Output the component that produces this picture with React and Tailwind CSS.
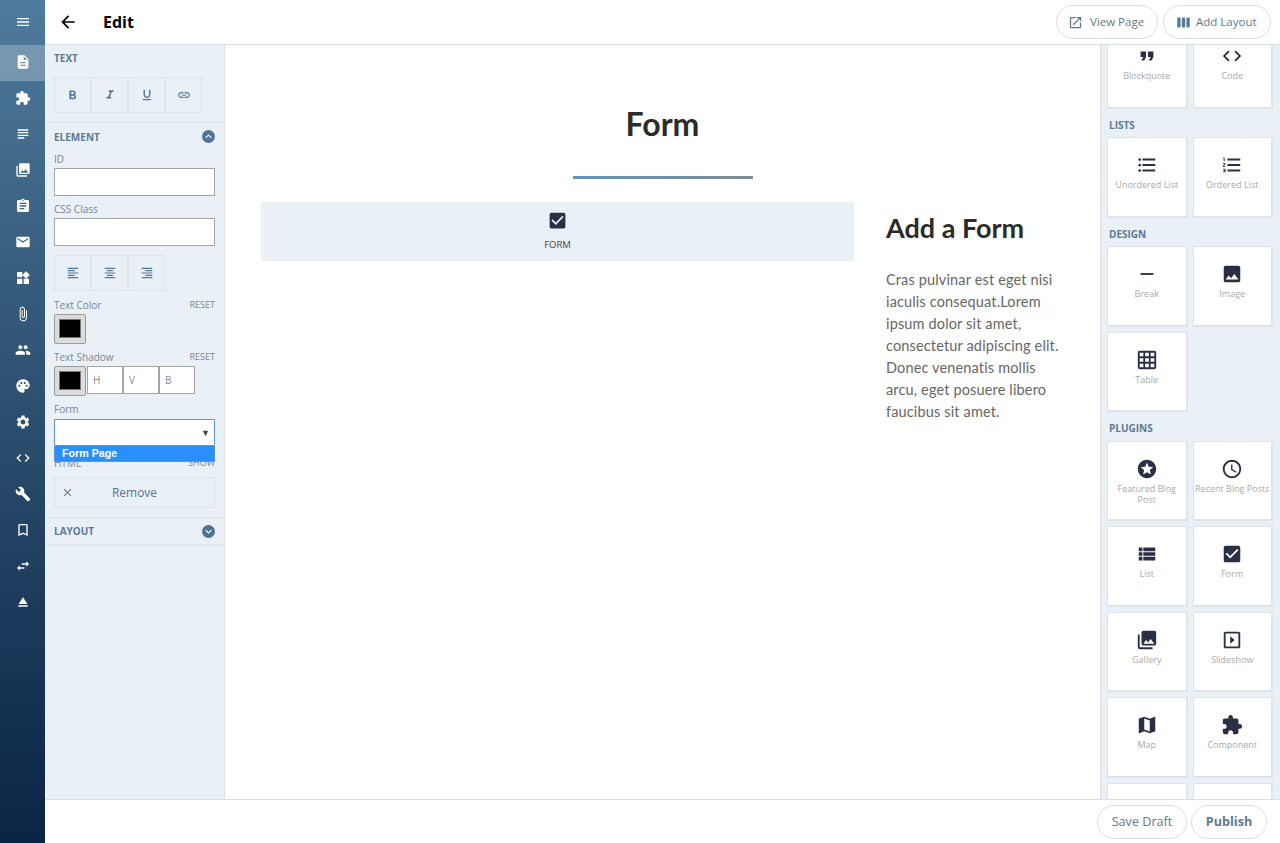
import React from "react";
import {
  MdMenu, MdDescription, MdExtension, MdSubject, MdPhotoLibrary, MdAssignment, MdEmail, MdWidgets,
  MdAttachFile, MdPeople, MdPalette, MdSettings, MdCode, MdBuild, MdBookmarkBorder, MdSwapHoriz, MdEject,
  MdArrowBack, MdOpenInNew, MdViewWeek, MdFormatBold, MdFormatItalic, MdFormatUnderlined, MdLink,
  MdFormatAlignLeft, MdFormatAlignCenter, MdFormatAlignRight, MdKeyboardArrowUp, MdKeyboardArrowDown, MdClose,
  MdCheckBox, MdFormatQuote, MdFormatListBulleted, MdFormatListNumbered, MdRemove, MdImage, MdGridOn, MdStars,
  MdAccessTime, MdViewList, MdSlideshow, MdMap,
} from "react-icons/md";

const sans = "font-['Open_Sans',sans-serif]";
const cond = "font-['Lato',sans-serif]";

const rail = [MdDescription, MdExtension, MdSubject, MdPhotoLibrary, MdAssignment, MdEmail, MdWidgets, MdAttachFile, MdPeople, MdPalette, MdSettings, MdCode, MdBuild, MdBookmarkBorder, MdSwapHoriz, MdEject];

function Card({ icon: Icon, label, size = 22 }) {
  return (
    <div className="w-[80.5px] h-[80.5px] bg-white border border-[#dfe4e9] border-b-2 border-r-2 flex flex-col items-center pt-[15px] shrink-0">
      <div className="h-[24px] flex items-center justify-center text-[#2a2f45]">
        <Icon size={size} />
      </div>
      <div className="text-[9px] leading-[11px] mt-[2px] text-center text-[#aaaaaa] whitespace-pre-line">{label}</div>
    </div>
  );
}

function Group({ title, children }) {
  return (
    <div>
      <div className="h-[28.5px] pt-[10px] pl-[2px] text-[10px] leading-[12px] font-bold text-[#5b7a94]">{title}</div>
      <div className="flex flex-wrap gap-[5px]">{children}</div>
    </div>
  );
}

function ToolBtn({ children }) {
  return <div className="w-[37px] h-[36px] border border-[#dde5ec] flex items-center justify-center text-[#55799a]">{children}</div>;
}

function Label({ children, right }) {
  return (
    <div className="flex justify-between h-[12px] text-[10px] leading-[10px] text-[#7a8794]">
      <span>{children}</span>
      {right && <span className="text-[9px]">{right}</span>}
    </div>
  );
}

function Swatch() {
  return (
    <div className="w-[32px] h-[30px] rounded-[2px] border border-[#9a9a9a] bg-[#dcdcdc] p-[4px] pb-[5px]">
      <div className="w-full h-full bg-black border border-[#777]" />
    </div>
  );
}

export default function App() {
  return (
    <div className={`${sans} w-[1280px] h-[843px] flex overflow-hidden bg-white`}>
      <aside className="w-[45px] shrink-0 bg-gradient-to-b from-[#4f7b9c] to-[#0a2444] flex flex-col items-center text-white">
        <div className="h-[45px] flex items-center justify-center pb-[1px]"><MdMenu size={16} /></div>
        {rail.map((Icon, i) => (
          <div key={i} className={`w-full h-[36px] flex items-center justify-center pb-[2px] ${i === 0 ? "bg-white/25" : ""}`}>
            <Icon size={16} />
          </div>
        ))}
      </aside>

      <div className="flex-1 flex flex-col min-w-0">
        <header className="h-[45px] shrink-0 border-b border-[#dcdfe2] flex items-center">
          <MdArrowBack size={20} className="ml-[13px] text-black" />
          <div className="ml-[25px] text-[16px] font-bold text-black">Edit</div>
          <div className="ml-auto mr-[9px] flex gap-[5px]">
            <div className="h-[34px] w-[102px] rounded-full border border-[#dcdfe2] flex items-center pl-[11px] gap-[7px] text-[11.5px] text-[#64798c]">
              <MdOpenInNew size={15} className="text-[#55799a]" /> View Page
            </div>
            <div className="h-[34px] w-[108px] rounded-full border border-[#dcdfe2] flex items-center pl-[12px] gap-[5px] text-[11.5px] text-[#64798c]">
              <MdViewWeek size={15} className="text-[#55799a]" /> Add Layout
            </div>
          </div>
        </header>

        <div className="flex-1 flex min-h-0">
          <section className="w-[180px] shrink-0 bg-[#e9f0f6] border-r border-[#dcdfe2] flex flex-col">
            <div className="h-[78px] px-[9px] pt-[7px] border-b border-[#dde3e9]">
              <div className="text-[10px] leading-[12px] font-bold text-[#5b7a94]">TEXT</div>
              <div className="flex mt-[13px]">
                <ToolBtn><MdFormatBold size={15} /></ToolBtn>
                <ToolBtn><MdFormatItalic size={14} /></ToolBtn>
                <ToolBtn><MdFormatUnderlined size={14} /></ToolBtn>
                <ToolBtn><MdLink size={14} /></ToolBtn>
              </div>
            </div>

            <div className="relative h-[395px] px-[9px] pt-[7px] border-b border-[#dde3e9]">
              <div className="flex justify-between items-center h-[12px]">
                <span className="text-[10px] leading-[14px] pt-[1px] font-bold text-[#5b7a94]">ELEMENT</span>
                <span className="w-[13px] h-[13px] rounded-full bg-[#4f7395] text-white flex items-center justify-center"><MdKeyboardArrowUp size={13} /></span>
              </div>
              <div className="mt-[12px]"><Label>ID</Label></div>
              <div className="w-[161px] h-[28px] mt-[2px] bg-white border border-[#a5a5a5]" />
              <div className="mt-[8px]"><Label>CSS Class</Label></div>
              <div className="w-[161px] h-[28px] mt-[2px] bg-white border border-[#a5a5a5]" />
              <div className="flex mt-[9px]">
                <ToolBtn><MdFormatAlignLeft size={14} /></ToolBtn>
                <ToolBtn><MdFormatAlignCenter size={14} /></ToolBtn>
                <ToolBtn><MdFormatAlignRight size={14} /></ToolBtn>
              </div>
              <div className="mt-[9px]"><Label right="RESET">Text Color</Label></div>
              <div className="mt-[2px]"><Swatch /></div>
              <div className="mt-[8px]"><Label right="RESET">Text Shadow</Label></div>
              <div className="flex mt-[2px]">
                <Swatch />
                <div className="w-[1px]" />
                {["H", "V", "B"].map((t) => (
                  <div key={t} className="w-[36px] h-[28px] bg-white border border-[#a5a5a5] text-[10px] leading-[26px] pl-[5px] text-[#8a8a8a]">{t}</div>
                ))}
              </div>
              <div className="mt-[8px]"><Label>Form</Label></div>
              <div className="relative mt-[3px] w-[161px] h-[27px] bg-white border border-[#5f93d6] rounded-[1px]">
                <span className="absolute right-[4px] top-[7px] text-[9px] leading-[12px] text-[#444]">▼</span>
              </div>
              <div className="relative h-[16px] w-[161px]">
                <div className="absolute inset-x-0 top-[12px]"><Label right="SHOW">HTML</Label></div>
                <div className="absolute inset-0 bg-[#2b8ffb] border border-[#5f93d6] border-t-0 font-['Liberation_Sans',sans-serif] font-bold text-[10.7px] leading-[14px] pl-[7px] text-white">Form Page</div>
              </div>
              <div className="mt-[15px] w-[161px] h-[31px] border border-[#dde5ec] flex items-center relative text-[#5f7488]">
                <MdClose size={13} className="absolute left-[6px]" />
                <span className="w-full text-center text-[12px]">Remove</span>
              </div>
            </div>

            <div className="h-[28px] px-[9px] border-b border-[#dde3e9] flex justify-between items-center">
              <span className="text-[10px] font-bold text-[#5b7a94]">LAYOUT</span>
              <span className="w-[13px] h-[13px] rounded-full bg-[#4f7395] text-white flex items-center justify-center"><MdKeyboardArrowDown size={13} /></span>
            </div>
          </section>

          <main className="w-[875px] shrink-0 flex flex-col">
            <h1 className={`${cond} mt-[56px] text-center text-[32px] leading-[46px] font-bold text-[#2b2b2b]`}>Form</h1>
            <div className="mx-auto mt-[29px] w-[180px] h-[3px] bg-gradient-to-r from-[#5f93bc] to-[#7f8c96]" />
            <div className="flex mt-[23px] pl-[36px]">
              <div className="w-[593px] h-[59px] bg-[#e9f0f6] flex flex-col items-center pt-[8px]">
                <MdCheckBox size={21} className="text-[#2a2f45]" />
                <div className="text-[9.5px] leading-[12px] mt-[8px] text-[#444]">FORM</div>
              </div>
              <div className="ml-[32px] w-[180px]">
                <h2 className={`${cond} mt-[8px] text-[27px] leading-[36px] font-bold text-[#2b2b2b] whitespace-nowrap`}>Add a Form</h2>
                <p className={`${cond} mt-[23px] text-[14.5px] leading-[22px] tracking-[0.15px] text-[#666666] whitespace-nowrap`}>
                  Cras pulvinar est eget nisi<br />iaculis consequat.Lorem<br />ipsum dolor sit amet,<br />consectetur adipiscing elit.<br />Donec venenatis mollis<br />arcu, eget posuere libero<br />faucibus sit amet.
                </p>
              </div>
            </div>
          </main>

          <section className="flex-1 bg-[#e9f0f6] border-l border-[#dcdfe2] overflow-hidden pl-[6px]">
            <div className="-mt-[17px] flex flex-col">
              <div className="flex gap-[5px]">
                <Card icon={MdFormatQuote} label="Blockquote" />
                <Card icon={MdCode} label="Code" />
              </div>
              <Group title="LISTS">
                <Card icon={MdFormatListBulleted} label="Unordered List" />
                <Card icon={MdFormatListNumbered} label="Ordered List" />
              </Group>
              <Group title="DESIGN">
                <Card icon={MdRemove} label="Break" />
                <Card icon={MdImage} label="Image" />
                <Card icon={MdGridOn} label="Table" />
              </Group>
              <Group title="PLUGINS">
                <Card icon={MdStars} label={"Featured Blog\nPost"} />
                <Card icon={MdAccessTime} label="Recent Blog Posts" />
                <Card icon={MdViewList} label="List" />
                <Card icon={MdCheckBox} label="Form" />
                <Card icon={MdPhotoLibrary} label="Gallery" />
                <Card icon={MdSlideshow} label="Slideshow" />
                <Card icon={MdMap} label="Map" />
                <Card icon={MdExtension} label="Component" />
                <Card icon={MdExtension} label="" />
                <Card icon={MdExtension} label="" />
              </Group>
            </div>
          </section>
        </div>

        <footer className="h-[44px] shrink-0 border-t border-[#dcdfe2] bg-white flex items-center justify-end pr-[13px] gap-[4px]">
          <div className="w-[90px] h-[34px] rounded-full border border-[#dcdfe2] flex items-center justify-center pt-[1px] text-[12.6px] text-[#64798c]">Save Draft</div>
          <div className="w-[76px] h-[34px] rounded-full border border-[#dcdfe2] flex items-center justify-center pt-[1px] text-[12.6px] font-bold text-[#5b7a94]">Publish</div>
        </footer>
      </div>
    </div>
  );
}
